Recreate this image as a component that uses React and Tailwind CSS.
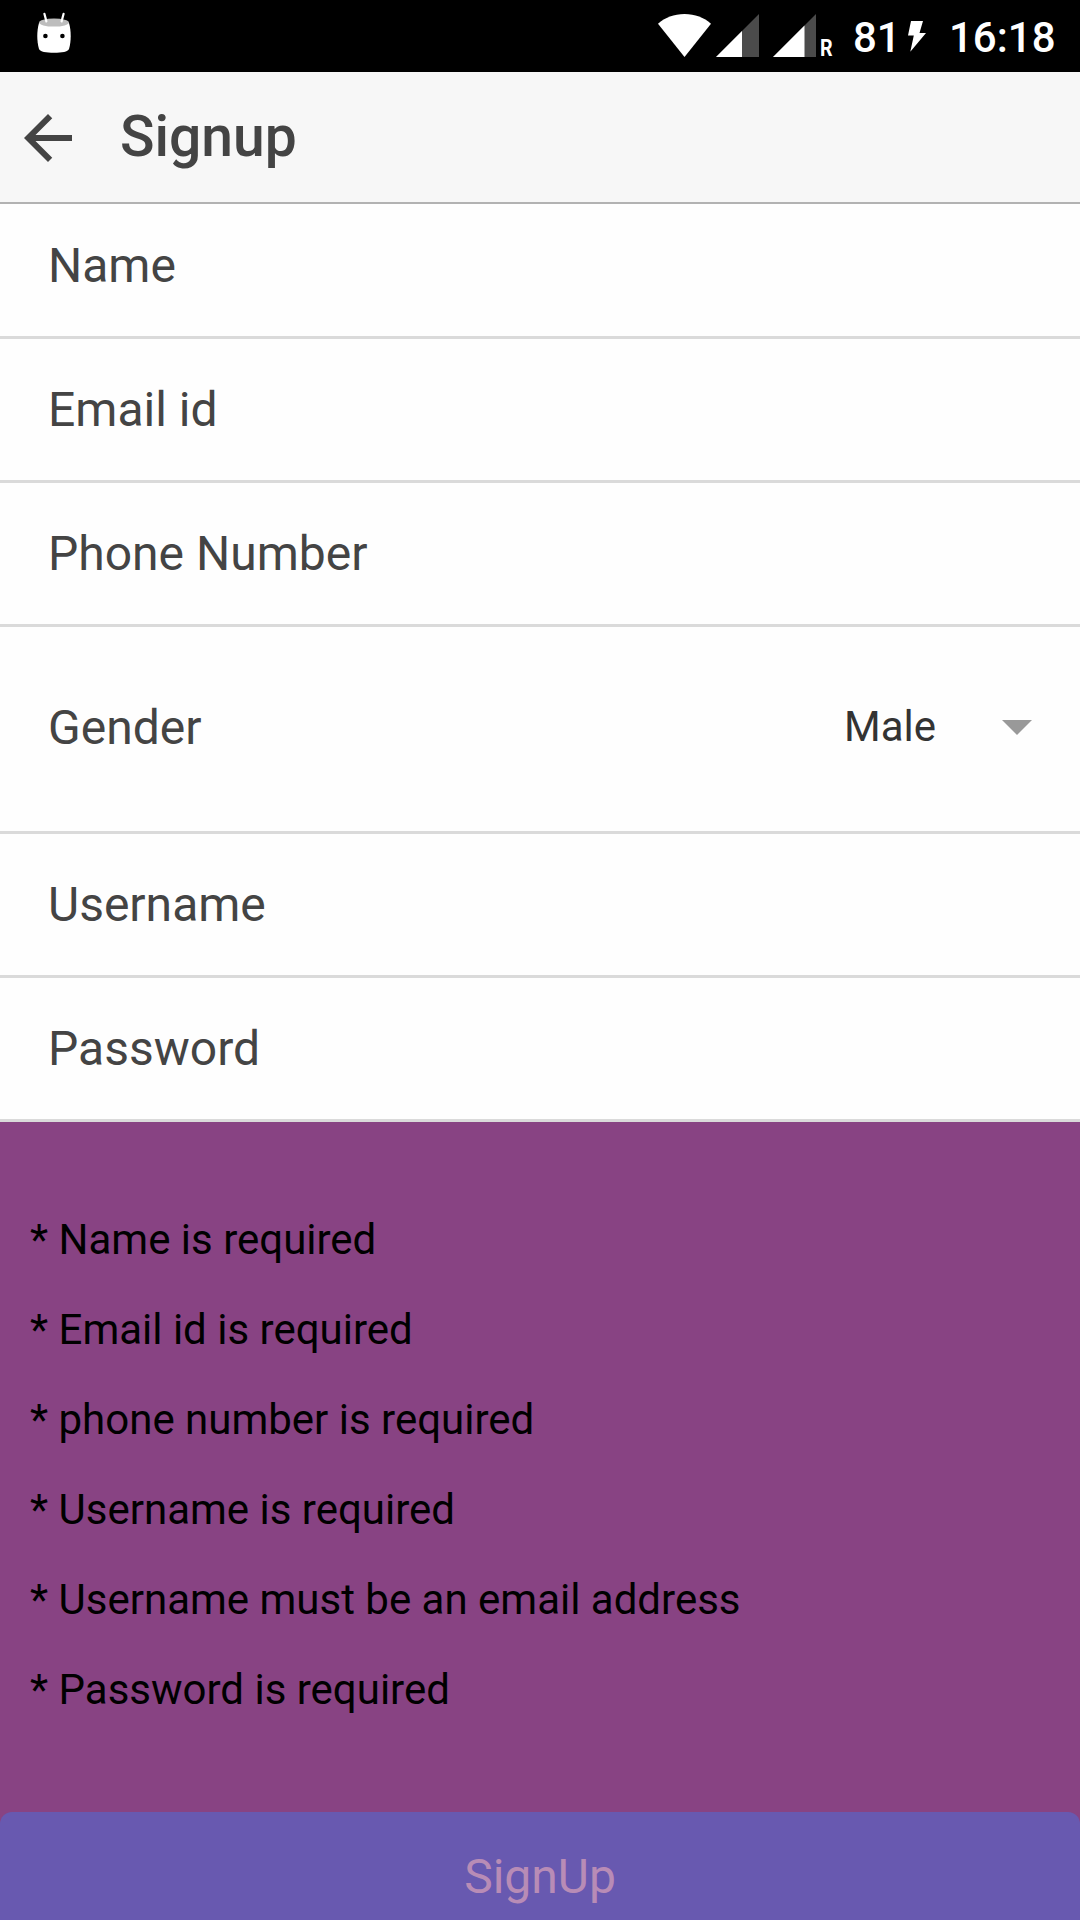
function Marshmallow() {
  return (
    <svg className="h-[42px] w-[36px]" viewBox="0 0 36 42">
      <path d="M3 11C.7 19 .7 29 3 37c1.2 2.7 7 3.8 15 3.8s13.8-1.1 15-3.8c2.3-8 2.3-18 0-26z" fill="#fff" />
      <ellipse cx="18" cy="10.6" rx="15" ry="4" fill="#bdbdbd" />
      <path d="M8.4 1.8l2 7.6M27.6 1.8l-2 7.6" stroke="#fff" strokeWidth="2.2" strokeLinecap="round" />
      <circle cx="9.4" cy="24" r="2.3" />
      <circle cx="26.4" cy="24" r="2.3" />
    </svg>
  );
}

function Wifi() {
  return (
    <svg className="h-[43px] w-[53px]" viewBox="0 0 53 43">
      <path d="M0 9.7C7 3.6 16 0 26.5 0S46 3.6 53 9.7L26.5 43z" fill="#fff" />
    </svg>
  );
}

function Signal({ level }) {
  return (
    <svg className="h-[43px] w-[43px]" viewBox="0 0 43 43">
      <path d="M43 0v43H0z" fill="#4b4b4b" />
      <path d={`M${level} ${43 - level}V43H0z`} fill="#fff" />
    </svg>
  );
}

function StatusBar() {
  return (
    <div className="flex h-[72px] shrink-0 items-start bg-black text-[42px] leading-[76px] font-medium text-white">
      <div className="ml-[36px] pt-[12px]"><Marshmallow /></div>
      <div className="ml-auto flex items-start pt-[14px]">
        <Wifi />
        <div className="ml-[5px]"><Signal level={26} /></div>
        <div className="ml-[14px]"><Signal level={31.5} /></div>
      </div>
      <span className="ml-[4px] w-[13px] origin-left scale-x-[0.82] text-[24px] leading-[96px] font-bold">R</span>
      <span className="ml-[20px] w-[51px]">81</span>
      <svg className="mt-[21px] ml-[4px] h-[31px] w-[18px]" viewBox="0 0 18 31">
        <path d="M3 0h12l-3.5 12H18L2.3 30.7 5.8 14.5H0z" fill="#fff" />
      </svg>
      <span className="ml-[23px] w-[131px]">16:18</span>
    </div>
  );
}

function Header() {
  return (
    <header className="flex h-[132px] shrink-0 items-center border-b-2 border-[#b2b2b2] bg-[#f7f7f7] text-[#444]">
      <svg className="mt-px ml-[24px] h-[48px] w-[48px]" viewBox="0 0 16 16">
        <path d="M16 7H3.83l5.59-5.59L8 0 0 8l8 8 1.41-1.41L3.83 9H16z" fill="currentColor" />
      </svg>
      <h1 className="ml-[48px] text-[57px] leading-[60px] font-medium">Signup</h1>
    </header>
  );
}

function Field({ label, first }) {
  return (
    <label className={`flex items-center border-b-[3px] border-[#dadada] pl-[48px] text-[48px] leading-[48px] text-[#444] ${first ? "h-[135px] pb-[9px]" : "h-[144px]"}`}>
      {label}
    </label>
  );
}

const errors = [
  "Name is required",
  "Email id is required",
  "phone number is required",
  "Username is required",
  "Username must be an email address",
  "Password is required",
];

export default function App() {
  return (
    <div className="flex h-[1920px] w-[1080px] flex-col overflow-hidden bg-[#884383] font-['Roboto',sans-serif]">
      <StatusBar />
      <Header />
      <form className="shrink-0 bg-[#fefefe]">
        <Field label="Name" first />
        <Field label="Email id" />
        <Field label="Phone Number" />
        <div className="flex h-[207px] items-center border-b-[3px] border-[#dadada] pr-[48px] pl-[48px] text-[48px] leading-[48px] text-[#444]">
          <span className="mb-[2px]">Gender</span>
          <span className="mb-[5px] ml-auto w-[158px] text-[42px] leading-[42px] text-[#333]">Male</span>
          <svg className="mb-[3px] h-[15px] w-[30px]" viewBox="0 0 30 15">
            <path d="M0 0h30L15 15z" fill="#999" />
          </svg>
        </div>
        <Field label="Username" />
        <Field label="Password" />
      </form>
      <ul className="mt-[73px] ml-[30px] text-[42px] leading-[90px] text-black">
        {errors.map((e) => (
          <li key={e}>* {e}</li>
        ))}
      </ul>
      <button className="mt-[77px] flex h-[144px] w-full shrink-0 items-start justify-center rounded-[12px] bg-[#6859b0] pt-[41px] text-[48px] leading-[48px] text-[#b88cb6]">
        SignUp
      </button>
    </div>
  );
}
